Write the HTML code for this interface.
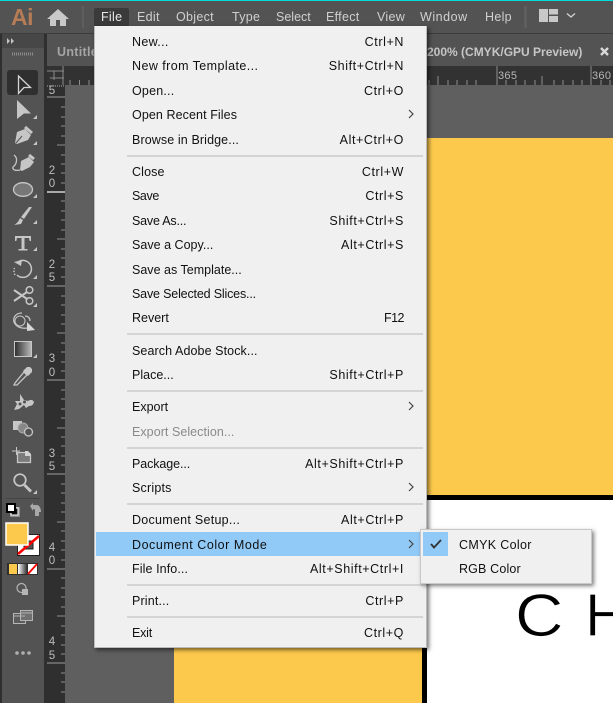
<!DOCTYPE html>
<html><head><meta charset="utf-8"><style>
html,body{margin:0;padding:0}
#p{position:relative;width:613px;height:703px;overflow:hidden;background:#5f5f5f;font-family:"Liberation Sans",sans-serif}
#p div,#p span.a{position:absolute}
.m{top:9px;font-size:12.5px;letter-spacing:.3px;color:#d0d0d0;line-height:16px;white-space:nowrap}
.r{position:absolute;left:132px;width:272px;height:20px;font-size:12.5px;letter-spacing:.33px;line-height:20px;color:#111;white-space:nowrap}
.r i{position:absolute;right:0;top:0;font-style:normal;letter-spacing:.6px}
.s{position:absolute;left:127px;width:296px;height:2px;background:#d4d4d4}
.v{font-size:11.5px;color:#bdbdbd;left:47px;line-height:12px;width:10px;text-align:center}
</style></head><body><div id="p">
<!-- top bar -->
<div style="left:0;top:0;width:613px;height:1px;background:#00dcdc"></div>
<div style="left:0;top:1px;width:613px;height:33px;background:#535353"></div>
<div style="left:0;top:33px;width:613px;height:1px;background:#3c3c3c"></div>
<div style="left:11px;top:3px;font-size:23px;font-weight:bold;color:#b57c56;line-height:28px;letter-spacing:-.5px">Ai</div>
<svg style="position:absolute;left:46px;top:7px" width="24" height="20"><path d="M12 2 L23 12 H20 V19 H14 V13 H10 V19 H4 V12 H1 Z" fill="#c9c9c9"/></svg>
<div style="left:82px;top:6px;width:2px;height:22px;background:#5e5e5e"></div>
<div style="left:94px;top:8px;width:35px;height:19px;background:#3a3a3a;border-radius:2px"></div>
<div class="m" style="left:101px;color:#e8e8e8">File</div>
<div class="m" style="left:137px">Edit</div>
<div class="m" style="left:176px">Object</div>
<div class="m" style="left:232px">Type</div>
<div class="m" style="left:276px;letter-spacing:0">Select</div>
<div class="m" style="left:326px">Effect</div>
<div class="m" style="left:377px">View</div>
<div class="m" style="left:420px;letter-spacing:.55px">Window</div>
<div class="m" style="left:485px">Help</div>
<div style="left:524px;top:6px;width:3px;height:22px;background:#5e5e5e"></div>
<svg style="position:absolute;left:539px;top:8px" width="40" height="15"><path d="M0 1H9V14H0ZM10 1H19V6.500H10ZM10 8H19V14H10Z" fill="#c8c8c8"/><path d="M28 5.500L32 9L36 5.500" fill="none" stroke="#d0d0d0" stroke-width="1.400"/></svg>
<!-- tab bar -->
<div style="left:46px;top:34px;width:567px;height:32px;background:#535353"></div>
<div style="left:57px;top:44px;font-size:12.5px;font-weight:bold;color:#a5a5a5;line-height:16px;letter-spacing:.3px">Untitle</div>
<div style="left:427px;top:44px;font-size:12px;font-weight:bold;color:#c6c6c6;line-height:16px;white-space:nowrap">200% (CMYK/GPU Preview)</div>
<svg style="position:absolute;left:600px;top:47px" width="9" height="9"><path d="M1 1L8 8M8 1L1 8" stroke="#d8d8d8" stroke-width="2.400"/></svg>
<!-- horizontal ruler -->
<div style="left:47px;top:66px;width:566px;height:19px;background:#323232"></div>
<svg style="position:absolute;left:47px;top:66px" width="566" height="19">
<path d="M0 5H17M16 0V19M3 12H17M7 5V14" stroke="#8a8a8a" fill="none"/>
<path d="M23 14V19M32.500 14V19M42 14V19M51.400 14V19M60 10V19M70 14V19M80 14V19M90 14V19M99 14V19M108 10V19M118 14V19M127 14V19M137 14V19M146 14V19M155 10V19M165 14V19M174 14V19M184 14V19M193 14V19M202 0V19M212 14V19M221 14V19M231 14V19M240 14V19M250 0V19M259 14V19M268 14V19M278 14V19M287 14V19M297 0V19M306 14V19M316 14V19M325 14V19M335 14V19M344 0V19M354 14V19M363 14V19M373 14V19M382 14V19M391 10V19M401 14V19M410 14V19M420 14V19M429 14V19M450 0V19M459 14V19M469 14V19M478 14V19M488 14V19M495 10V19M507 14V19M516 14V19M526 14V19M535 14V19M544 0V19M554 14V19M563 14V19" stroke="#8d8d8d" fill="none"/>
</svg>
<div style="left:498px;top:70px;font-size:11px;color:#b8b8b8;line-height:12px;letter-spacing:.3px">365</div>
<div style="left:592px;top:70px;font-size:11px;color:#b8b8b8;line-height:12px;letter-spacing:.3px">360</div>
<!-- toolbar -->
<div style="left:0;top:34px;width:47px;height:669px;background:#2f2f2f"></div>
<div style="left:2px;top:34px;width:42px;height:669px;background:#535353"></div>
<div style="left:2px;top:34px;width:42px;height:14px;background:#474747"></div>
<svg style="position:absolute;left:0;top:34px" width="47" height="669" viewBox="0 34 47 669">
<path d="M7 38L10 41L7 44ZM11 38L14 41L11 44Z" fill="#c4c4c4"/>
<path d="M12 54H33" stroke="#8d8d8d" stroke-width="3" stroke-dasharray="1 1"/>
<rect x="7" y="70" width="31" height="25" rx="3" fill="#2f2f2f"/>
<path d="M18.500 76L30.500 87.500H24L18.500 93.500Z" fill="none" stroke="#d4d4d4" stroke-width="1.300"/>
<path d="M17 100L31 113.500H24L17 119Z" fill="#c6c6c6"/>
<path d="M37 115V119H33ZM37 141V145H33ZM37 194V198H33ZM37 220V224H33ZM37 247V251H33ZM37 275V279H33ZM37 303V307H33ZM37 354V358H33ZM37 490V494H33Z" fill="#c6c6c6"/>
<!-- pen -->
<path d="M15 143L17 132L25 129L31 135L28 140L17 144Z" fill="#c6c6c6"/><path d="M25 127L32 133" stroke="#c6c6c6" stroke-width="3"/><path d="M16 143L22 136" stroke="#555"/>
<!-- curvature -->
<path d="M20 170L21 161L29 157L34 162L30 167L22 171Z" fill="#c6c6c6"/><path d="M29 155L34 159" stroke="#c6c6c6" stroke-width="3"/><path d="M14 155C18 158 17 164 13 167C12 170 16 171 20 170" fill="none" stroke="#c6c6c6" stroke-width="1.300"/>
<!-- ellipse -->
<ellipse cx="23" cy="189.500" rx="9.500" ry="6.800" fill="#777" stroke="#c6c6c6" stroke-width="1.300"/>
<!-- brush -->
<path d="M32 207L24 219L21 217L29 207Z" fill="#c6c6c6"/><path d="M20 218L23 220L21 224L14 225Q18 223 20 218Z" fill="#c6c6c6"/>
<!-- type -->
<path d="M15 236H31V241H29.700L29 238H24.500V249H27.500V250.500H18.500V249H21.500V238H17L16.300 241H15Z" fill="#c6c6c6"/>
<!-- rotate -->
<path d="M18 262A8.500 8.500 0 1 1 17 275" fill="none" stroke="#c6c6c6" stroke-width="1.500"/><path d="M15 275A8.500 8.500 0 0 1 14.500 268" fill="none" stroke="#c6c6c6" stroke-width="1.500" stroke-dasharray="1.500 1.500"/><path d="M14 262L22 260L21 266Z" fill="#c6c6c6"/>
<!-- scissors -->
<path d="M14 290L27 299M14 301L27 292" stroke="#c6c6c6" stroke-width="2" fill="none"/><circle cx="29.500" cy="290" r="3.300" fill="none" stroke="#c6c6c6" stroke-width="1.500"/><circle cx="29.500" cy="301" r="3.300" fill="none" stroke="#c6c6c6" stroke-width="1.500"/>
<!-- shape builder -->
<path d="M22 313C15 313 13 318 14 322C16 327 22 329 27 328" fill="none" stroke="#c6c6c6" stroke-width="1.300"/><circle cx="20" cy="321" r="5" fill="none" stroke="#c6c6c6"/><path d="M25 316C28 316 30 318 30 321" fill="none" stroke="#c6c6c6" stroke-width="1.300"/><path d="M27 322L35 330L27 331Z" fill="#d8d8d8"/>
<!-- gradient -->
<defs><linearGradient id="g"><stop offset="0" stop-color="#2c2c2c"/><stop offset="1" stop-color="#bbb"/></linearGradient><linearGradient id="g2"><stop offset="0" stop-color="#fff"/><stop offset="1" stop-color="#333"/></linearGradient></defs>
<rect x="14.500" y="341.500" width="17" height="15" fill="url(#g)" stroke="#c8c8c8"/>
<!-- eyedropper -->
<path d="M15 383L14 385L17 385L27 375L24 372Z" fill="none" stroke="#c6c6c6" stroke-width="1.300"/><path d="M23 371L27 367H30L32 369V372L28 376Z" fill="#c6c6c6"/>
<!-- blend -->
<path d="M20 394L24 400L28 401C31 399 33 400 34 402C33 405 32 406 29 406L26 408L24 405L19 409L14 410L17 404L15 401L20 401Z" fill="#c6c6c6"/><circle cx="20" cy="404" r="1.500" fill="#535353"/><circle cx="24.500" cy="402" r="1.500" fill="#535353"/>
<!-- symbol sprayer -->
<rect x="13" y="421" width="9" height="9" fill="#c6c6c6"/><circle cx="23" cy="428" r="5" fill="#888" stroke="#aaa"/><circle cx="28.500" cy="432" r="4" fill="#535353" stroke="#c6c6c6" stroke-width="1.300"/>
<!-- artboard -->
<path d="M12 451H20M16.500 447V455" stroke="#c6c6c6"/><path d="M17.500 452.500H26L30.500 455V462.500H17.500Z" fill="#7a7a7a" stroke="#c6c6c6" stroke-width="1.300"/><path d="M25 451H28L31 454V456H25Z" fill="#d2d2d2"/>
<!-- zoom -->
<circle cx="20" cy="480" r="5.800" fill="none" stroke="#c6c6c6" stroke-width="1.700"/><path d="M24.500 485L31 491.500" stroke="#c6c6c6" stroke-width="2.800"/>
<path d="M6 498.500H40" stroke="#444"/>
<!-- default colors -->
<rect x="10" y="507" width="10" height="10" fill="#8c8c8c"/><rect x="11" y="508" width="7" height="7" fill="#111" stroke="#fff"/><rect x="7" y="504" width="8" height="8" fill="#fff" stroke="#000" stroke-width="2"/>
<!-- swap -->
<path d="M30 506L33 503V505H37C39 505 41 508 41 512H39V516H35V511C35 509 34 509 33 509V511Z" fill="#a8a8a8"/>
<!-- stroke -->
<rect x="17" y="534" width="23" height="22" fill="#222"/><rect x="18" y="535" width="21" height="20" fill="#fff"/><rect x="24" y="541" width="9" height="8" fill="#535353" stroke="#222"/>
<path d="M18 554L39 536" stroke="#f00" stroke-width="2.500"/>
<!-- fill -->
<rect x="6" y="523" width="22" height="22" fill="#fdc94d" stroke="#fff" stroke-width="1.500"/>
<!-- modes -->
<rect x="7" y="563" width="31" height="12" fill="#2f2f2f"/><rect x="9" y="564" width="8" height="10" fill="#fdc94d"/><rect x="18" y="564" width="9" height="10" fill="url(#g2)"/><rect x="28" y="564" width="9" height="10" fill="#fff"/><path d="M28 574L37 564" stroke="#f00" stroke-width="1.800"/>
<!-- draw mode -->
<circle cx="21.500" cy="588" r="4.500" fill="none" stroke="#b5b5b5" stroke-width="1.200"/><rect x="22" y="589" width="6" height="6" fill="#b5b5b5"/>
<!-- screen mode -->
<rect x="13.500" y="613.500" width="12" height="10" fill="#5c5c5c" stroke="#b5b5b5"/><rect x="20.500" y="610.500" width="12" height="10" fill="#707070" stroke="#b5b5b5"/><path d="M14 616H25M21 613H32" stroke="#b5b5b5"/>
<circle cx="17" cy="653" r="1.800" fill="#b0b0b0"/><circle cx="23" cy="653" r="1.800" fill="#b0b0b0"/><circle cx="29" cy="653" r="1.800" fill="#b0b0b0"/>
</svg>
<!-- vertical ruler -->
<div style="left:47px;top:85px;width:18px;height:618px;background:#2f2f2f"></div>
<svg style="position:absolute;left:47px;top:85px" width="18" height="618" viewBox="47 85 18 618">
<path d="M47 97H65M47 192H65M47 286H65M47 380H65M47 474H65M47 569H65M47 663H65" stroke="#9d9d9d"/>
<path d="M47 192H65" stroke="#aaa" stroke-width="2"/>
<path d="M61 107H65M61 117H65M61 126H65M61 136H65M57 145H65M61 155H65M61 164H65M61 173H65M61 183H65M61 201H65M61 211H65M61 220H65M61 230H65M57 239H65M61 249H65M61 258H65M61 267H65M61 277H65M61 296H65M61 305H65M61 315H65M61 324H65M57 333H65M61 343H65M61 352H65M61 362H65M61 371H65M61 390H65M61 399H65M61 409H65M61 418H65M57 428H65M61 437H65M61 446H65M61 456H65M61 465H65M61 484H65M61 493H65M61 503H65M61 512H65M57 522H65M61 531H65M61 541H65M61 550H65M61 560H65M61 578H65M61 588H65M61 597H65M61 607H65M57 616H65M61 626H65M61 635H65M61 645H65M61 654H65M61 673H65M61 682H65M61 692H65" stroke="#8d8d8d"/>
<path d="M47 86H65" stroke="#aaa" stroke-dasharray="1 1"/>
</svg>
<div class="v" style="top:85px">5</div>
<div class="v" style="top:165px">2</div><div class="v" style="top:178px">0</div>
<div class="v" style="top:259px">2</div><div class="v" style="top:272px">5</div>
<div class="v" style="top:353px">3</div><div class="v" style="top:367px">0</div>
<div class="v" style="top:448px">3</div><div class="v" style="top:461px">5</div>
<div class="v" style="top:542px">4</div><div class="v" style="top:555px">0</div>
<div class="v" style="top:636px">4</div><div class="v" style="top:650px">5</div>
<!-- artwork -->
<div style="left:427px;top:138px;width:186px;height:357px;background:#fdc94d"></div>
<div style="left:427px;top:495px;width:186px;height:5px;background:#000"></div>
<div style="left:427px;top:500px;width:186px;height:203px;background:#fff"></div>
<div style="left:174px;top:640px;width:248px;height:63px;background:#fdc94d"></div>
<div style="left:422px;top:640px;width:5px;height:63px;background:#000"></div>
<div style="left:515px;top:581px;font-size:60px;line-height:70px;color:#000;-webkit-text-stroke:.8px #fff;white-space:nowrap;transform:scaleX(1.12);transform-origin:0 0">C</div>
<div style="left:585px;top:581px;font-size:60px;line-height:70px;color:#000;-webkit-text-stroke:.8px #fff;white-space:nowrap">H</div>
<!-- main menu -->
<div style="left:94px;top:26px;width:333px;height:622px;background:#f0f0f0;box-shadow:2px 2px 4px rgba(0,0,0,.55);border:0 solid #bbb;border-width:0 1px 1px 1px;box-sizing:border-box"></div>
<div style="left:96px;top:532px;width:329px;height:24px;background:#91c9f7"></div>
<div class="r" style="top:32px">New...<i>Ctrl+N</i></div>
<div class="r" style="top:56px;letter-spacing:.43px">New from Template...<i>Shift+Ctrl+N</i></div>
<div class="r" style="top:81px;letter-spacing:.2px">Open...<i>Ctrl+O</i></div>
<div class="r" style="top:105px;letter-spacing:.09px">Open Recent Files</div>
<div class="r" style="top:130px;letter-spacing:.11px">Browse in Bridge...<i>Alt+Ctrl+O</i></div>
<div class="s" style="top:155px"></div>
<div class="r" style="top:162px;letter-spacing:.13px">Close<i>Ctrl+W</i></div>
<div class="r" style="top:186px;letter-spacing:-.4px">Save<i>Ctrl+S</i></div>
<div class="r" style="top:211px;letter-spacing:-.2px">Save As...<i>Shift+Ctrl+S</i></div>
<div class="r" style="top:235px;letter-spacing:.02px">Save a Copy...<i>Alt+Ctrl+S</i></div>
<div class="r" style="top:260px;letter-spacing:.01px">Save as Template...</div>
<div class="r" style="top:284px;letter-spacing:-.17px">Save Selected Slices...</div>
<div class="r" style="top:308px;letter-spacing:0">Revert<i style="letter-spacing:-.5px">F12</i></div>
<div class="s" style="top:333px"></div>
<div class="r" style="top:341px;letter-spacing:.09px">Search Adobe Stock...</div>
<div class="r" style="top:365px;letter-spacing:0">Place...<i>Shift+Ctrl+P</i></div>
<div class="s" style="top:390px"></div>
<div class="r" style="top:397px;letter-spacing:0">Export</div>
<div class="r" style="top:422px;color:#8a8a8a;letter-spacing:.05px">Export Selection...</div>
<div class="s" style="top:447px"></div>
<div class="r" style="top:454px;letter-spacing:-.1px">Package...<i>Alt+Shift+Ctrl+P</i></div>
<div class="r" style="top:478px;letter-spacing:.2px">Scripts</div>
<div class="s" style="top:503px"></div>
<div class="r" style="top:510px;letter-spacing:.27px">Document Setup...<i>Alt+Ctrl+P</i></div>
<div class="r" style="top:535px;letter-spacing:.54px">Document Color Mode</div>
<div class="r" style="top:559px;letter-spacing:.1px">File Info...<i>Alt+Shift+Ctrl+I</i></div>
<div class="s" style="top:584px"></div>
<div class="r" style="top:591px;letter-spacing:.15px">Print...<i>Ctrl+P</i></div>
<div class="s" style="top:616px"></div>
<div class="r" style="top:623px;letter-spacing:-.2px">Exit<i>Ctrl+Q</i></div>
<svg style="position:absolute;left:407px;top:100px" width="10" height="460" fill="none" stroke="#444" stroke-width="1.200"><path d="M2 10L6 14L2 18M2 302L6 306L2 310M2 383L6 387L2 391M2 440L6 444L2 448"/></svg>
<!-- submenu -->
<div style="left:420px;top:529px;width:172px;height:55px;background:#f0f0f0;border:1px solid #c8c8c8;box-sizing:border-box;box-shadow:2px 2px 4px rgba(0,0,0,.5)"></div>
<div style="left:423px;top:532px;width:25px;height:24px;background:#91c9f7"></div>
<svg style="position:absolute;left:429px;top:537px" width="14" height="14"><path d="M2 7L5 10.500L12 3" fill="none" stroke="#333" stroke-width="1.800"/></svg>
<div class="r" style="left:459px;width:120px;top:535px">CMYK Color</div>
<div class="r" style="left:459px;width:120px;top:559px;letter-spacing:.15px">RGB Color</div>
</div></body></html>
